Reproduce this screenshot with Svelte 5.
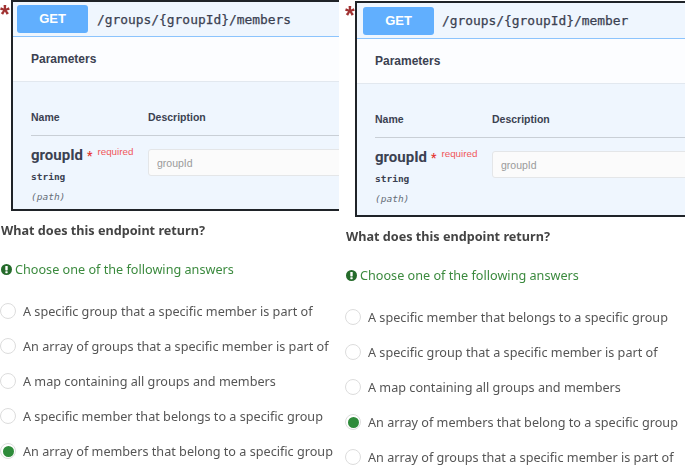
<script>
  const questions = [
    {
      path: "/groups/{groupId}/members",
      answers: [
        "A specific group that a specific member is part of",
        "An array of groups that a specific member is part of",
        "A map containing all groups and members",
        "A specific member that belongs to a specific group",
        "An array of members that belong to a specific group"
      ],
      picked: 4,
      variant: "first"
    },
    {
      path: "/groups/{groupId}/member",
      answers: [
        "A specific member that belongs to a specific group",
        "A specific group that a specific member is part of",
        "A map containing all groups and members",
        "An array of members that belong to a specific group",
        "An array of groups that a specific member is part of"
      ],
      picked: 3,
      variant: "second"
    }
  ];
</script>

<div class="page">
  {#each questions as q}
    <section class="col {q.variant}">
      <div class="shot">
        <span class="star">*</span>
        <div class="opblock">
          <div class="summary">
            <span class="method">GET</span>
            <span class="path">{q.path}</span>
          </div>
          <div class="params-head">Parameters</div>
          <div class="params">
            <div class="table-head">
              <span class="th-name">Name</span>
              <span>Description</span>
            </div>
            <div class="param-row">
              <div class="param-name">
                <div class="name-line">groupId<span class="req-star">*</span><span class="required">required</span></div>
                <div class="type">string</div>
                <div class="in">(path)</div>
              </div>
              <input class="field" placeholder="groupId" readonly />
            </div>
          </div>
        </div>
      </div>

      <div class="quiz">
        <h3>What does this endpoint return?</h3>
        <p class="hint">
          <svg width="11" height="11" viewBox="0 0 11 11" aria-hidden="true">
            <circle cx="5.5" cy="5.5" r="5.5" fill="#256b2b" />
            <rect x="4.3" y="2" width="2.4" height="4.4" rx="0.6" fill="#fff" />
            <rect x="4.3" y="7.2" width="2.4" height="2" rx="0.6" fill="#fff" />
          </svg>
          Choose one of the following answers
        </p>
        <ul>
          {#each q.answers as a, i}
            <li>
              <span class="radio" class:on={i === q.picked}></span>
              <span>{a}</span>
            </li>
          {/each}
        </ul>
      </div>
    </section>
  {/each}
</div>

<style>
  :global(body) {
    background: #fff;
  }
  .page {
    display: flex;
    width: 685px;
    height: 466px;
    overflow: hidden;
    font-family: "Noto Sans", "Open Sans", sans-serif;
  }
  .col {
    flex: none;
    min-width: 0;
    overflow: hidden;
    position: relative;
  }
  .first {
    width: 345px;
  }
  .second {
    width: 340px;
  }
  .shot {
    position: relative;
    padding-left: 11px;
    filter: blur(0.4px);
  }
  .first .shot {
    margin-right: 6px;
  }
  .second .shot {
    padding-top: 1px;
    padding-left: 10px;
  }
  .star {
    position: absolute;
    left: 0;
    top: 2px;
    color: #a03232;
    font: bold 25px/25px "Liberation Sans", sans-serif;
  }
  .second .star {
    left: 0;
    top: 3px;
  }
  .opblock {
    border: 2px solid #1f2328;
    border-right: 0;
    background: #eff6fe;
    height: 211px;
    box-sizing: border-box;
    overflow: hidden;
    font-family: "Liberation Sans", sans-serif;
    color: #3b4151;
  }
  .second .opblock {
    height: 216px;
  }
  .summary {
    display: flex;
    align-items: center;
    height: 34px;
    padding-left: 4px;
    border-bottom: 1px solid #8cc4fd;
    white-space: nowrap;
  }
  .second .summary {
    height: 35px;
    padding-left: 6px;
  }
  .method {
    flex: none;
    width: 71px;
    height: 28px;
    border-radius: 3px;
    background: #61affe;
    color: #fff;
    font-weight: 700;
    font-size: 13px;
    line-height: 28px;
    text-align: center;
  }
  .path {
    margin-left: 9px;
    font: 12.9px "DejaVu Sans Mono", monospace;
    -webkit-text-stroke: 0.25px #3b4151;
    color: #3b4151;
  }
  .second .path {
    margin-left: 8px;
  }
  .params-head {
    height: 44px;
    line-height: 44px;
    padding-left: 18px;
    background: rgba(255, 255, 255, 0.8);
    border-bottom: 1px solid #e2e8ef;
    font-size: 12px;
    font-weight: 700;
    white-space: nowrap;
  }
  .params {
    padding: 28px 0 0 18px;
  }
  .table-head {
    display: flex;
    height: 25px;
    border-bottom: 1px solid #c9cfd6;
    font-size: 10.5px;
    font-weight: 700;
    line-height: 14px;
    white-space: nowrap;
  }
  .th-name {
    width: 117px;
  }
  .param-row {
    display: flex;
    padding-top: 6px;
  }
  .param-name {
    flex: none;
    width: 117px;
  }
  .name-line {
    font-family: Roboto, sans-serif;
    font-size: 15px;
    font-weight: 700;
    line-height: 20px;
    white-space: nowrap;
  }
  .req-star {
    color: #e53935;
    font-size: 12px;
    margin-left: 4px;
    vertical-align: 0;
  }
  .required {
    font-family: "Liberation Sans", sans-serif;
    color: #f0565a;
    font-size: 9.8px;
    font-weight: 400;
    margin-left: 5px;
    vertical-align: 5px;
  }
  .type {
    font: bold 9.5px/12px "DejaVu Sans Mono", monospace;
    margin-top: 5px;
  }
  .in {
    font: italic 9.5px/12px "DejaVu Sans Mono", monospace;
    color: #666d78;
    margin-top: 8px;
  }
  .field {
    flex: none;
    width: 300px;
    height: 27px;
    box-sizing: border-box;
    margin: 7px 0 0 0;
    padding: 0 8px;
    border: 1px solid #e4e6e8;
    border-radius: 3px;
    background: #fbfbfb;
    font: 10.5px "Liberation Sans", sans-serif;
    outline: none;
  }
  .field::placeholder {
    color: #9a9a9a;
  }
  .quiz {
    padding-left: 1px;
    color: #555;
    filter: blur(0.25px);
  }
  h3 {
    margin: 10px 0 0;
    font-size: 12.65px;
    line-height: 18px;
    font-weight: 700;
    color: #444;
    white-space: nowrap;
  }
  .hint {
    display: flex;
    align-items: center;
    gap: 3px;
    margin: 21px 0 0;
    font-size: 12.65px;
    line-height: 18px;
    color: #3b8a3e;
    white-space: nowrap;
  }
  ul {
    list-style: none;
    margin: 24px 0 0;
    padding: 0;
    display: flex;
    flex-direction: column;
    gap: 17.1px;
  }
  li {
    display: flex;
    align-items: center;
    gap: 7px;
    height: 18px;
    font-size: 12.65px;
    white-space: nowrap;
  }
  .radio {
    flex: none;
    width: 16px;
    height: 16px;
    box-sizing: border-box;
    margin-left: -1px;
    border: 1px solid #dcdcdc;
    border-radius: 50%;
    background: #fff;
    position: relative;
  }
  .radio.on::after {
    content: "";
    position: absolute;
    inset: 1.5px;
    border-radius: 50%;
    background: #2e8b3a;
  }
</style>
